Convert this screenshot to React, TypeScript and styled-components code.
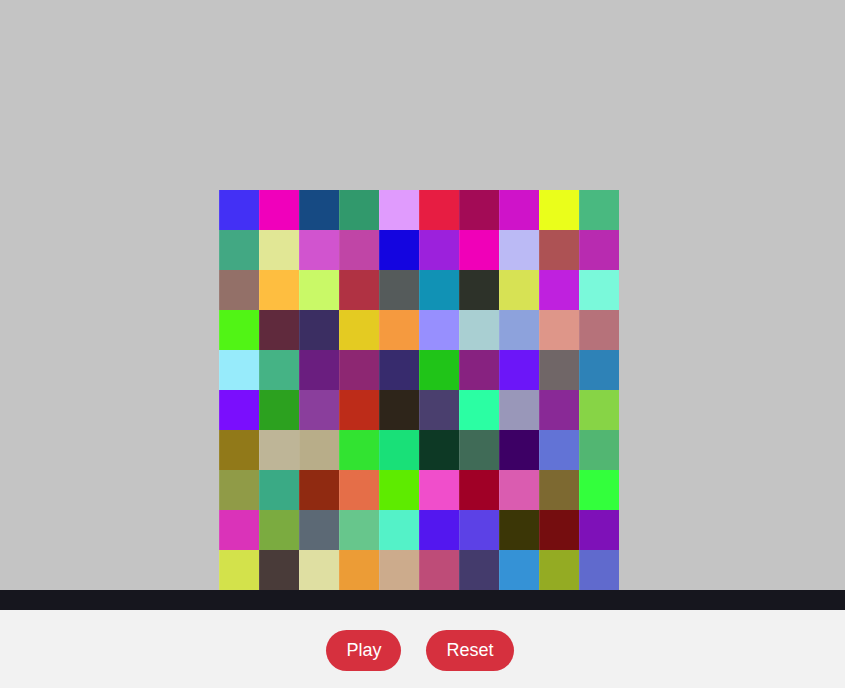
import styled, {createGlobalStyle} from "styled-components";

const GlobalStyle = createGlobalStyle`
  html, body {
    margin: 0;
    padding: 0;
    background: #f2f2f2;
    font-family: "Liberation Sans", Arial, sans-serif;
  }
`;

const COLORS: string[][] = [
    ["#4330f5", "#f000bb", "#164a83", "#31996c", "#e09bfd", "#e71d42", "#a30b56", "#cf13c9", "#eafe1b", "#49b980"],
    ["#42a883", "#e1e795", "#d154cf", "#c045a6", "#1405e0", "#9c21dc", "#f000b8", "#bbbaf5", "#ad5254", "#b82bb0"],
    ["#937068", "#febe40", "#c9f967", "#b03243", "#555b5b", "#1192b5", "#2d3229", "#d7e254", "#bf21de", "#7af9da"],
    ["#51f415", "#602a3d", "#3b2e62", "#e4cb22", "#f59a3f", "#978ffe", "#a9cfd2", "#8da2dc", "#de9689", "#b6727a"],
    ["#97ebfb", "#45b385", "#6a1e7f", "#8d2772", "#372b6d", "#20c418", "#872280", "#6c16f8", "#706667", "#2e82b7"],
    ["#7a0efd", "#2ca11f", "#8a3e9c", "#bd2c19", "#2e251a", "#4a3f6e", "#2bfea3", "#9997b9", "#892996", "#87d446"],
    ["#917919", "#beb597", "#b8ad89", "#32e331", "#19e078", "#0d3925", "#406b57", "#3d0065", "#6273d6", "#52b672"],
    ["#909b47", "#3aaa85", "#902a11", "#e56e48", "#5eeb00", "#f04ecb", "#a00026", "#da5cb0", "#7d6931", "#33ff3c"],
    ["#da33b9", "#7bab40", "#5c6975", "#67c68c", "#54f2c8", "#5317ef", "#5c41e6", "#3b3606", "#750d0f", "#7e11b8"],
    ["#d3e24b", "#493b39", "#dfdfa2", "#ec9c36", "#ccab8c", "#be4c78", "#443b6c", "#3592d6", "#94ab23", "#606acd"],
];

const Stage = styled.div`
  height: 590px;
  background: #c4c4c4;
  display: flex;
  justify-content: center;
  align-items: flex-end;
  padding-right: 7px;
  box-sizing: border-box;
`;

const Grid = styled.div`
  display: grid;
  grid-template-columns: repeat(10, 40px);
  grid-auto-rows: 40px;
`;

const Cell = styled.div<{ $color: string }>`
  background: ${(p) => p.$color};
  box-shadow: inset 0.5px 0 0 rgba(255, 255, 255, 0.18);
`;

const Floor = styled.div`
  height: 20px;
  background: #16161e;
`;

const Controls = styled.div`
  height: 78px;
  display: flex;
  justify-content: center;
  align-items: center;
  gap: 25px;
  padding: 2px 5px 0 0;
  box-sizing: border-box;
  background: #f2f2f2;
`;

const Button = styled.button`
  border: none;
  border-radius: 999px;
  background: #d6303e;
  color: #fff;
  font-family: "Liberation Sans", Arial, sans-serif;
  font-size: 18px;
  line-height: 21px;
  padding: 10px 20px;
  cursor: pointer;
`;

export default function App() {
    return (
        <>
            <GlobalStyle/>
            <Stage>
                <Grid>
                    {COLORS.flatMap((row, r) =>
                        row.map((c, i) => <Cell key={`${r}-${i}`} $color={c}/>)
                    )}
                </Grid>
            </Stage>
            <Floor/>
            <Controls>
                <Button>Play</Button>
                <Button>Reset</Button>
            </Controls>
        </>
    );
}
